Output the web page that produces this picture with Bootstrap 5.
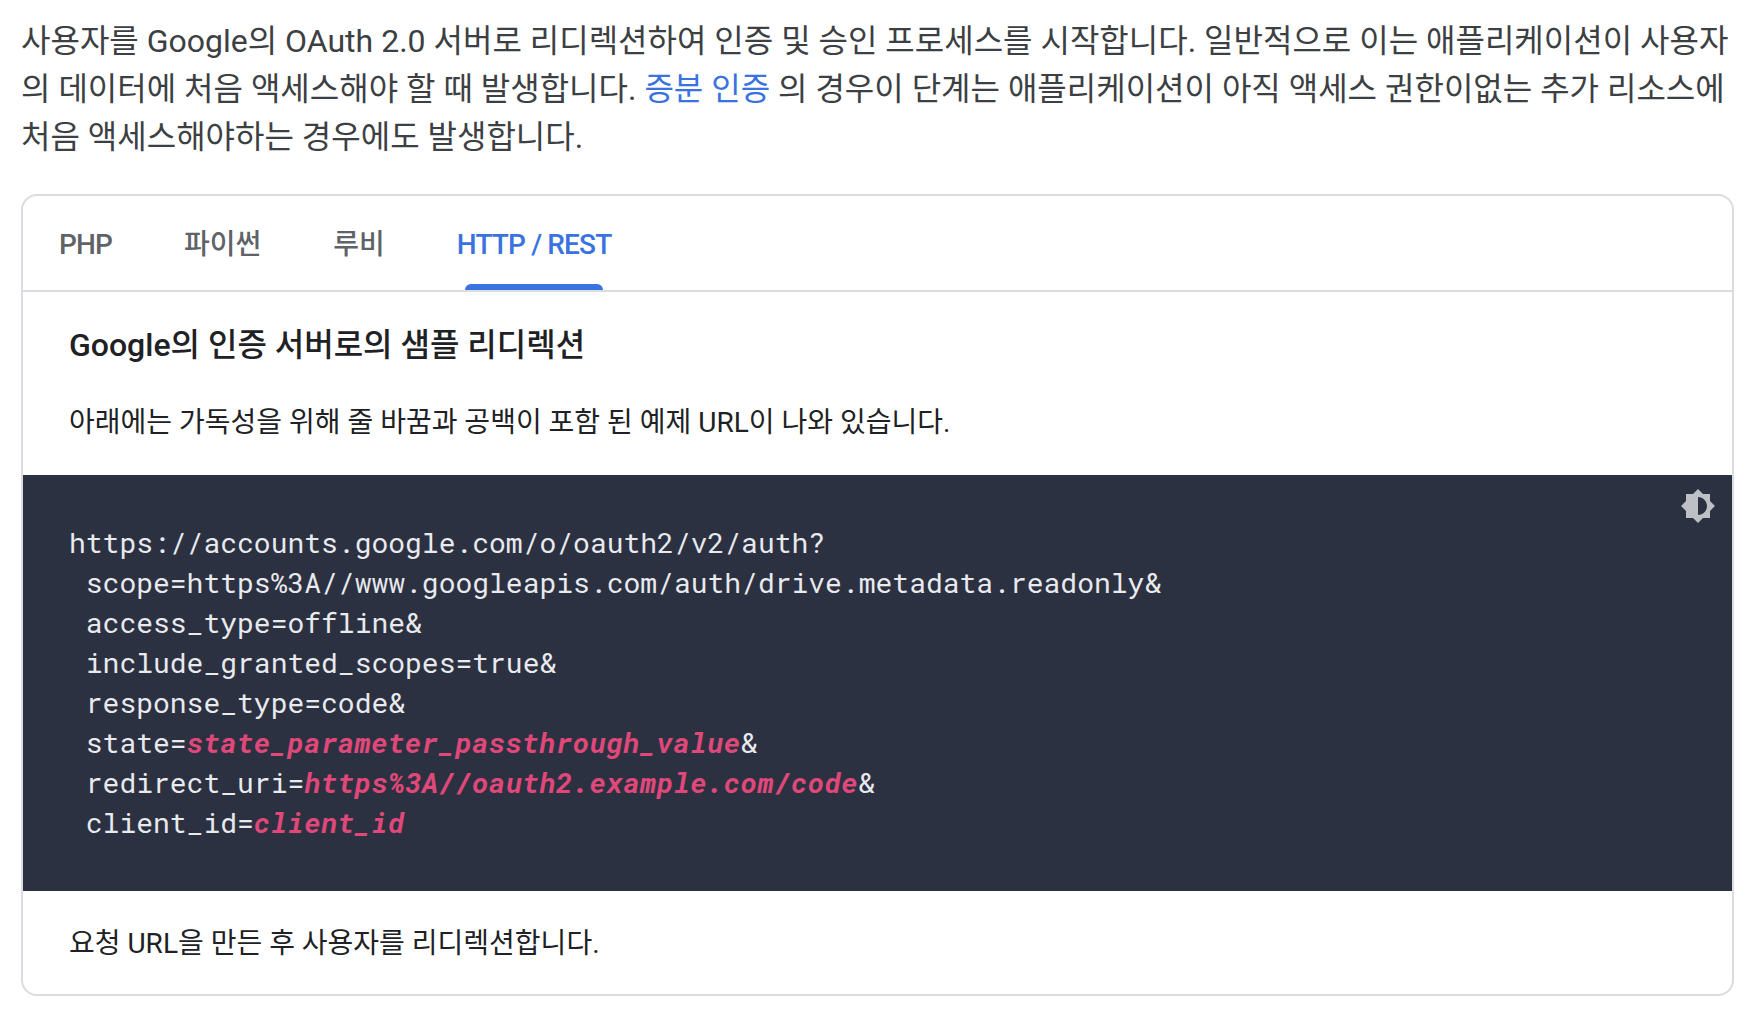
<!DOCTYPE html>
<html lang="ko">
<head>
<meta charset="utf-8">
<title>OAuth</title>
<link href="https://cdn.jsdelivr.net/npm/bootstrap@5.3.0/dist/css/bootstrap.min.css" rel="stylesheet">
<style>
body{background:#fff;color:#3c4043;font-family:Roboto,"Noto Sans CJK KR",sans-serif;font-size:32px;line-height:48px;padding:17px 13px 0 21px;overflow:hidden;height:1019px}
.intro{margin:0 0 33px;letter-spacing:0}
.intro a{color:#3a72e0;text-decoration:none}
.panel{border:2px solid #dadce0;border-radius:16px;overflow:hidden;background:#fff}
.tabbar{border-bottom:2px solid #dadce0;height:96px;padding-left:0}
.tabitem{font-size:28px;font-weight:500;line-height:36px;color:#5f6368;padding:31px 36px 0;height:94px;position:relative}
.tabitem.on{color:#3a72e0}
.tabitem.on::after{content:"";position:absolute;left:44px;right:44px;bottom:0;height:6px;background:#3a72e0;border-radius:6px 6px 0 0}
.latin{letter-spacing:-.86px}
.inner{padding:0 46px}
.ttl{font-size:32px;font-weight:500;line-height:40px;color:#202124;margin:33px 0 38px}
.txt{font-size:28px;line-height:40px;color:#202124;margin:0}
.codebox{background:#2c3142;color:#e8eaed;font-family:"Roboto Mono","DejaVu Sans Mono",monospace;font-size:28px;line-height:40px;padding:48px 46px 48px;margin:32px 0 0;position:relative;overflow:hidden;white-space:pre}
.codebox em{color:#e0487a;font-weight:700;font-style:italic;letter-spacing:.35px}
.themeico{position:absolute;right:16px;top:13px;width:36px;height:36px}
.foot{padding:33px 46px 30px}
</style>
</head>
<body>
<p class="intro">사용자를 Google의 OAuth 2.0 서버로 리디렉션하여 인증 및 승인 프로세스를 시작합니다. 일반적으로 이는 애플리케이션이 사용자의 데이터에 처음 액세스해야 할 때 발생합니다. <a href="#">증분 인증</a> 의 경우이 단계는 애플리케이션이 아직 액세스 권한이없는 추가 리소스에 처음 액세스해야하는 경우에도 발생합니다.</p>
<div class="panel">
  <div class="tabbar d-flex">
    <div class="tabitem latin">PHP</div>
    <div class="tabitem">파이썬</div>
    <div class="tabitem">루비</div>
    <div class="tabitem latin on">HTTP / REST</div>
  </div>
  <div class="inner">
    <div class="ttl">Google의 인증 서버로의 샘플 리디렉션</div>
    <p class="txt">아래에는 가독성을 위해 줄 바꿈과 공백이 포함 된 예제 URL이 나와 있습니다.</p>
  </div>
  <div class="codebox"><svg class="themeico" viewBox="0 0 24 24"><path fill="#bdc1c6" d="M20 8.69V4h-4.69L12 .69 8.69 4H4v4.69L.69 12 4 15.31V20h4.69L12 23.31 15.31 20H20v-4.69L23.31 12 20 8.69zM12 18V6c3.31 0 6 2.69 6 6s-2.69 6-6 6z"/></svg>https://accounts.google.com/o/oauth2/v2/auth?
 scope=https%3A//www.googleapis.com/auth/drive.metadata.readonly&amp;
 access_type=offline&amp;
 include_granted_scopes=true&amp;
 response_type=code&amp;
 state=<em>state_parameter_passthrough_value</em>&amp;
 redirect_uri=<em>https%3A//oauth2.example.com/code</em>&amp;
 client_id=<em>client_id</em></div>
  <div class="foot"><p class="txt">요청 URL을 만든 후 사용자를 리디렉션합니다.</p></div>
</div>
</body>
</html>
